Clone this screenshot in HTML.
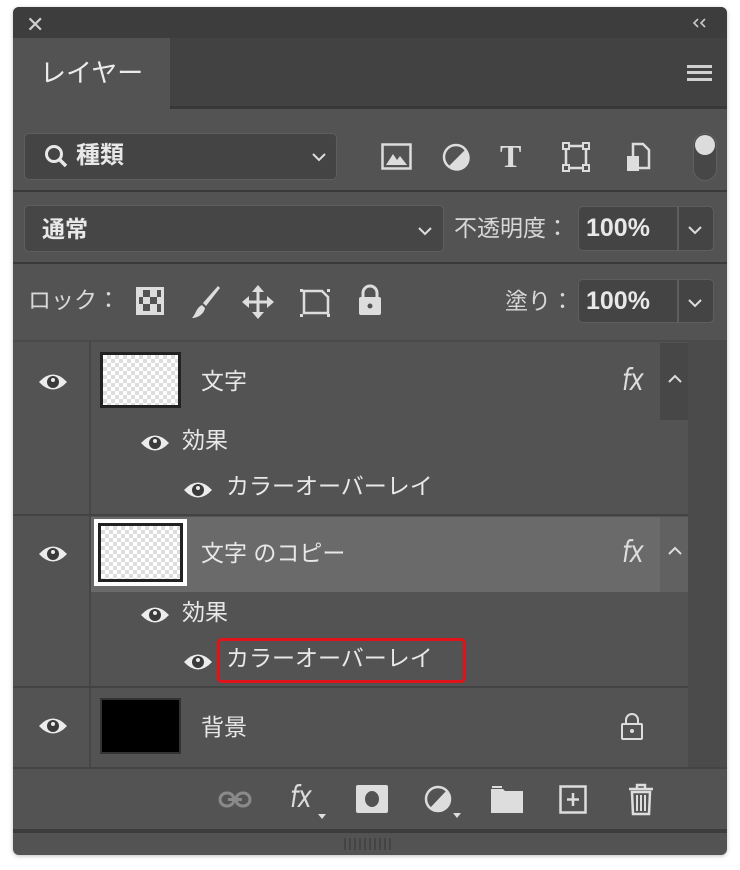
<!DOCTYPE html>
<html><head><meta charset="utf-8"><style>
*{margin:0;padding:0;box-sizing:border-box}
body{width:740px;height:870px;background:#fff;position:relative;overflow:hidden;font-family:"Liberation Sans","Noto Sans CJK JP",sans-serif;color:#e8e8e8}
.a{position:absolute}
.t{position:absolute;white-space:nowrap;line-height:1}
.box{position:absolute;background:#464646;border:1.5px solid #5e5e5e;border-radius:5px}
.hl{position:absolute;height:2px;background:#3a3a3a}
.fx{position:absolute;white-space:nowrap;line-height:1;font-size:30px;font-style:italic;color:#dcdcdc;font-family:"DejaVu Sans",sans-serif;font-weight:200;letter-spacing:-1px;transform:scaleX(0.8);transform-origin:left}
svg{position:absolute;overflow:visible}
</style></head><body>
<div class="a" style="left:13px;top:7px;width:714px;height:848px;background:#535353;border-radius:6px;overflow:hidden;box-shadow:0 1px 4px rgba(0,0,0,.25)">
</div>
<!-- title bar -->
<div class="a" style="left:13px;top:7px;width:714px;height:31px;background:#3d3d3d;border-radius:6px 6px 0 0"></div>
<div class="t" style="left:26px;top:14px;font-size:22px;color:#cfcfcf">✕</div>
<svg style="left:691px;top:18px" width="18" height="10"><path d="M7 1 L3 5 L7 9 M14 1 L10 5 L14 9" fill="none" stroke="#c8c8c8" stroke-width="1.6"/></svg>
<!-- tab row -->
<div class="a" style="left:170px;top:38px;width:557px;height:70px;background:#424242"></div>
<div class="a" style="left:170px;top:106px;width:557px;height:3px;background:#383838"></div>
<div class="t" style="left:40px;top:60px;font-size:26px;color:#ececec">レイヤー</div>
<div class="a" style="left:687px;top:65px;width:25px;height:16px;border-top:3px solid #d0d0d0;border-bottom:3px solid #d0d0d0"></div>
<div class="a" style="left:687px;top:71px;width:25px;height:3px;background:#d0d0d0"></div>
<!-- filter row -->
<div class="box" style="left:24px;top:133px;width:313px;height:47px;background:#444"></div>
<svg style="left:44px;top:144px" width="26" height="26"><circle cx="10" cy="10" r="7.5" fill="none" stroke="#e8e8e8" stroke-width="3"/><path d="M15 15 L22 22" stroke="#e8e8e8" stroke-width="3.5"/></svg>
<div class="t" style="left:76px;top:144px;font-size:24px;font-weight:bold">種類</div>
<svg style="left:312px;top:152px" width="14" height="10"><path d="M1 2 L7 8 L13 2" fill="none" stroke="#ddd" stroke-width="2"/></svg>
<svg style="left:381px;top:143px" width="32" height="27"><rect x="1.5" y="1.5" width="28" height="24" fill="none" stroke="#ddd" stroke-width="2.5"/><path d="M5 22 L12 11 L16 17 L19 13 L26 22Z" fill="#ddd"/></svg>
<svg style="left:442px;top:143px" width="28" height="28"><circle cx="14" cy="14" r="12" fill="none" stroke="#ddd" stroke-width="2.5"/><path d="M24 6 A12 12 0 0 1 6 24Z" fill="#ddd"/></svg>
<div class="t" style="left:500px;top:140px;font-size:32px;font-weight:bold;font-family:'Liberation Serif',serif;color:#ddd">T</div>
<svg style="left:562px;top:142px" width="28" height="30"><rect x="4" y="4" width="20" height="22" fill="none" stroke="#ddd" stroke-width="2.5"/><g fill="#535353" stroke="#ddd" stroke-width="2"><rect x="1" y="1" width="6" height="6"/><rect x="21" y="1" width="6" height="6"/><rect x="1" y="23" width="6" height="6"/><rect x="21" y="23" width="6" height="6"/></g></svg>
<svg style="left:625px;top:142px" width="26" height="30"><path d="M8 2 H18 L24 8 V26 H8Z" fill="none" stroke="#ddd" stroke-width="2.5"/><rect x="2" y="14" width="12" height="15" fill="#ddd"/></svg>
<div class="a" style="left:693px;top:133px;width:24px;height:48px;border:1.5px solid #606060;border-radius:12px;background:#474747"></div>
<div class="a" style="left:695px;top:135px;width:20px;height:20px;border-radius:10px;background:#dcdcdc"></div>
<div class="hl" style="left:13px;top:190px;width:714px"></div>
<!-- blend row -->
<div class="box" style="left:24px;top:205px;width:420px;height:47px"></div>
<div class="t" style="left:42px;top:218px;font-size:23px;font-weight:bold">通常</div>
<svg style="left:418px;top:226px" width="14" height="10"><path d="M1 2 L7 8 L13 2" fill="none" stroke="#ddd" stroke-width="2"/></svg>
<div class="t" style="left:454px;top:217px;font-size:23px;color:#d8d8d8">不透明度：</div>
<div class="box" style="left:578px;top:206px;width:136px;height:45px;background:#444"></div>
<div class="a" style="left:677px;top:207px;width:2px;height:43px;background:#5e5e5e"></div>
<div class="t" style="left:586px;top:216px;font-size:25px;font-weight:bold">100%</div>
<svg style="left:688px;top:225px" width="14" height="10"><path d="M1 2 L7 8 L13 2" fill="none" stroke="#ddd" stroke-width="2"/></svg>
<div class="hl" style="left:13px;top:262px;width:714px"></div>
<!-- lock row -->
<div class="t" style="left:28px;top:289px;font-size:23px;color:#d8d8d8">ロック：</div>
<svg style="left:136px;top:287px" width="28" height="28"><rect x="0" y="0" width="28" height="28" fill="#ddd"/><g fill="#535353"><rect x="7" y="3" width="7" height="7"/><rect x="14" y="10" width="7" height="7"/><rect x="7" y="17" width="7" height="7"/><rect x="3" y="10" width="4" height="7"/><rect x="21" y="3" width="4" height="7"/><rect x="21" y="17" width="4" height="8"/></g></svg>
<svg style="left:190px;top:284px" width="32" height="36"><path d="M28 2 L30 4 L16 22 L13 19Z" fill="#ddd"/><path d="M12 21 L15 24 C14 30 8 34 2 34 C6 30 6 24 12 21Z" fill="#ddd"/></svg>
<svg style="left:242px;top:285px" width="32" height="34"><path d="M16 2 V32 M2 17 H30" stroke="#ddd" stroke-width="3"/><path d="M16 0 L10 7 H22Z M16 34 L10 27 H22Z M0 17 L7 11 V23Z M32 17 L25 11 V23Z" fill="#ddd"/></svg>
<svg style="left:298px;top:285px" width="34" height="34"><path d="M6 6 H24 L30 12 V28 H6Z" fill="none" stroke="#ddd" stroke-width="2.5"/><g fill="#ddd"><rect x="2" y="4" width="3" height="3"/><rect x="29" y="4" width="3" height="3"/><rect x="2" y="29" width="3" height="3"/><rect x="29" y="29" width="3" height="3"/></g></svg>
<svg style="left:357px;top:284px" width="26" height="32"><path d="M6 14 V9 A7 7 0 0 1 20 9 V14" fill="none" stroke="#ddd" stroke-width="3"/><rect x="2" y="13" width="22" height="18" rx="2" fill="#ddd"/><circle cx="13" cy="22" r="2.5" fill="#535353"/></svg>
<div class="t" style="left:505px;top:290px;font-size:23px;color:#d8d8d8">塗り：</div>
<div class="box" style="left:578px;top:279px;width:136px;height:44px;background:#444"></div>
<div class="a" style="left:677px;top:280px;width:2px;height:42px;background:#5e5e5e"></div>
<div class="t" style="left:586px;top:289px;font-size:25px;font-weight:bold">100%</div>
<svg style="left:688px;top:298px" width="14" height="10"><path d="M1 2 L7 8 L13 2" fill="none" stroke="#ddd" stroke-width="2"/></svg>
<!-- layers area -->
<div class="a" style="left:13px;top:340px;width:714px;height:2px;background:#4a4a4a"></div>
<div class="a" style="left:688px;top:342px;width:39px;height:426px;background:#4b4b4b"></div>
<div class="a" style="left:660px;top:343px;width:28px;height:77px;background:#474747"></div>
<div class="a" style="left:89px;top:342px;width:2px;height:426px;background:#474747"></div>
<div class="a" style="left:13px;top:514px;width:675px;height:2px;background:#434343"></div>
<div class="a" style="left:13px;top:686px;width:675px;height:2px;background:#434343"></div>
<div class="a" style="left:91px;top:517px;width:569px;height:75px;background:#6a6a6a"></div>
<div class="a" style="left:660px;top:517px;width:28px;height:75px;background:#616161"></div>

<svg width="0" height="0"><defs><g id="e"><path d="M1 9 Q15 -6 29 9 Q15 24 1 9Z" fill="#ececec"/><circle cx="15" cy="9" r="6" fill="#3a3a3a"/><circle cx="15" cy="7" r="2" fill="#ececec"/></g></defs></svg>
<svg style="left:38px;top:373px" width="30" height="18"><use href="#e"/></svg>
<svg style="left:140px;top:434px" width="30" height="18"><use href="#e"/></svg>
<svg style="left:183px;top:481px" width="30" height="18"><use href="#e"/></svg>
<svg style="left:38px;top:545px" width="30" height="18"><use href="#e"/></svg>
<svg style="left:140px;top:606px" width="30" height="18"><use href="#e"/></svg>
<svg style="left:183px;top:653px" width="30" height="18"><use href="#e"/></svg>
<svg style="left:38px;top:717px" width="30" height="18"><use href="#e"/></svg>

<div class="a" style="left:100px;top:352px;width:81px;height:56px;border:3px solid #222;background-color:#fff;background-image:conic-gradient(#ddd 25%,#fff 0 50%,#ddd 0 75%,#fff 0);background-size:8px 8px"></div>
<div class="a" style="left:94px;top:519px;width:93px;height:67px;background:#fff;padding:4px"><div style="width:100%;height:100%;border:3px solid #222;background-image:conic-gradient(#ddd 25%,#fff 0 50%,#ddd 0 75%,#fff 0);background-size:8px 8px"></div></div>
<div class="a" style="left:100px;top:698px;width:81px;height:56px;border:2px solid #333;background:#000"></div>

<div class="t" style="left:201px;top:370px;font-size:23px">文字</div>
<div class="t" style="left:182px;top:429px;font-size:23px">効果</div>
<div class="t" style="left:226px;top:475px;font-size:23px">カラーオーバーレイ</div>
<div class="t" style="left:201px;top:542px;font-size:23px">文字 のコピー</div>
<div class="t" style="left:182px;top:601px;font-size:23px">効果</div>
<div class="t" style="left:226px;top:647px;font-size:23px">カラーオーバーレイ</div>
<div class="a" style="left:217px;top:638px;width:249px;height:45px;border:3px solid #e2121a;border-radius:5px"></div>
<div class="t" style="left:201px;top:716px;font-size:23px">背景</div>

<div class="fx" style="left:622px;top:366px">fx</div>
<div class="fx" style="left:622px;top:538px">fx</div>
<svg style="left:668px;top:374px" width="14" height="10"><path d="M1 8 L7 2 L13 8" fill="none" stroke="#ddd" stroke-width="2"/></svg>
<svg style="left:668px;top:546px" width="14" height="10"><path d="M1 8 L7 2 L13 8" fill="none" stroke="#ddd" stroke-width="2"/></svg>
<svg style="left:620px;top:712px" width="24" height="28"><path d="M6 12 V8 A6 6 0 0 1 18 8 V12" fill="none" stroke="#ddd" stroke-width="2"/><rect x="2" y="12" width="20" height="15" rx="1" fill="none" stroke="#ddd" stroke-width="2"/><circle cx="12" cy="19" r="2" fill="#ddd"/></svg>

<div class="a" style="left:13px;top:767px;width:714px;height:2px;background:#444"></div>
<svg style="left:218px;top:791px" width="36" height="18"><rect x="2" y="2" width="14" height="13" rx="6.5" fill="none" stroke="#8a8a8a" stroke-width="3"/><rect x="18" y="2" width="14" height="13" rx="6.5" fill="none" stroke="#8a8a8a" stroke-width="3"/><path d="M10 8.5 H24" stroke="#8a8a8a" stroke-width="3"/></svg>
<div class="fx" style="left:290px;top:783px">fx</div>
<svg style="left:318px;top:814px" width="10" height="6"><path d="M0 0 H8 L4 5Z" fill="#ddd"/></svg>
<svg style="left:356px;top:785px" width="32" height="28"><rect width="32" height="28" rx="2" fill="#ddd"/><ellipse cx="16" cy="14" rx="7" ry="8" fill="#535353"/></svg>
<svg style="left:425px;top:785px" width="36" height="36"><circle cx="13" cy="14" r="12" fill="none" stroke="#ddd" stroke-width="2.5"/><path d="M22 5 A12 12 0 0 1 5 23Z" fill="#ddd"/><path d="M28 28 H36 L32 33Z" fill="#ddd"/></svg>
<svg style="left:491px;top:785px" width="32" height="28"><path d="M0 4 H12 L14 6 H32 V28 H0Z" fill="#ddd"/><path d="M1 2 H11" stroke="#ddd" stroke-width="2"/></svg>
<svg style="left:559px;top:785px" width="28" height="29"><rect x="1.5" y="1.5" width="25" height="26" fill="none" stroke="#ddd" stroke-width="2.5"/><path d="M14 8 V21 M8 14.5 H20" stroke="#ddd" stroke-width="2.5"/></svg>
<svg style="left:627px;top:784px" width="28" height="31"><path d="M2 5 H26 M10 5 V1 H18 V5" fill="none" stroke="#ddd" stroke-width="2.5"/><path d="M5 8 H23 L22 30 H6Z" fill="none" stroke="#ddd" stroke-width="2.5"/><path d="M10 11 V27 M14 11 V27 M18 11 V27" stroke="#ddd" stroke-width="2"/></svg>
<div class="a" style="left:13px;top:829px;width:714px;height:4px;background:#3c3c3c"></div>
<div class="a" style="left:344px;top:838px;width:48px;height:12px;background:repeating-linear-gradient(90deg,#444 0 2px,transparent 2px 5px)"></div>
</body></html>
